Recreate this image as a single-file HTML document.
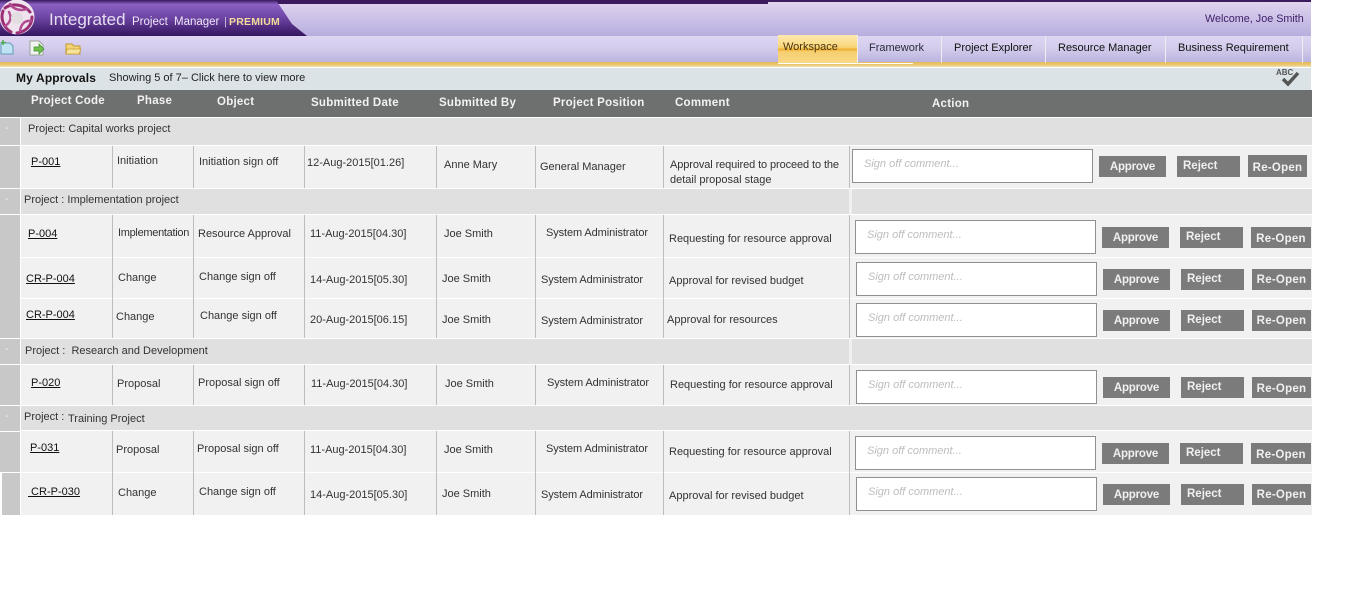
<!DOCTYPE html>
<html><head><meta charset="utf-8"><title>My Approvals</title>
<style>
html,body{margin:0;padding:0;background:#fff}
body{width:1347px;height:616px;overflow:hidden;position:relative;font-family:"Liberation Sans",Arial,sans-serif;font-size:11px;color:#333}
div,span,a{position:absolute;white-space:nowrap}
.t{line-height:14px;height:14px;margin-top:1px}
a.t{color:#111;text-decoration:underline}
.h{font-weight:bold;font-size:11.5px;color:#f2f2f2;line-height:14px;letter-spacing:.25px;margin-top:1px}
.g{background:#e0e0e0;height:26px;left:21px;width:1291px}
.s{background:#c8c8c8;left:0;width:20px}
.r{background:#f2f1f2;left:21px;width:1291px}
.v{background:#bdbdbd;width:1px}
.ta{background:#fff;border:1px solid #8f8f8f;box-sizing:border-box;width:241px;height:34px;font-style:italic;color:#bdbdbd;padding:7px 0 0 11px;line-height:15px}
.b{background:#7b7b7b;color:#f0f0f0;font-weight:bold;font-size:11.5px;height:21px;line-height:21px;text-align:center;box-sizing:border-box;padding-top:1px}
.a{letter-spacing:-.2px}
.o{letter-spacing:.25px}
.j{line-height:19px;text-align:left;text-indent:6px;width:63px}
.m{letter-spacing:-.3px}
.y{letter-spacing:-.1px}
.tab{top:36px;height:27px;line-height:25px;color:#2a2a3a;border-right:1px solid #eee;font-size:11px;box-sizing:border-box}
</style></head><body>

<div style="left:0;top:0;width:1311px;height:36px;background:linear-gradient(#e2d6ef,#cfc3e8 45%,#b8aede)"></div>
<div style="left:0;top:0;width:768px;height:4px;background:#3b1a5e"></div>
<div style="left:768px;top:0;width:543px;height:2px;background:#3b1a5e"></div>
<svg style="position:absolute;left:0;top:0" width="320" height="37"><defs><linearGradient id="p" x1="0" y1="0" x2="0" y2="1"><stop offset="0" stop-color="#3b1a5e"/><stop offset=".12" stop-color="#8a60c2"/><stop offset=".5" stop-color="#6c44a2"/><stop offset="1" stop-color="#35155f"/></linearGradient></defs>
<polygon points="0,0 276,0 292,24 307,36 0,36" fill="url(#p)"/>
<circle cx="17" cy="17" r="17.500" fill="#efe3ee"/>
<g fill="none" stroke-linecap="round">
<path d="M5 8C12 3 24 4 30 12" stroke="#9a2f75" stroke-width="3"/>
<path d="M32 17C32 26 25 32 17 33" stroke="#9a2f75" stroke-width="3"/>
<path d="M11 32C4 28 0 19 3 11" stroke="#9a2f75" stroke-width="3"/>
<path d="M10 4C14 10 21 11 27 9" stroke="#b24c92" stroke-width="2.500"/>
<path d="M31 21C25 20 21 24 20 31" stroke="#b24c92" stroke-width="2.500"/>
<path d="M5 26C10 23 12 18 9 12" stroke="#b24c92" stroke-width="2.500"/>
</g>
<circle cx="17" cy="18" r="6" fill="#e2dde0"/>
</svg>
<span class="t" style="left:49px;top:8px;height:22px;line-height:22px;font-size:17px;color:#e6def0">Integrated</span>
<span class="t" style="left:132px;top:14px;font-size:11.500px;color:#eee6f6">Project</span>
<span class="t" style="left:174px;top:14px;font-size:11.500px;color:#eee6f6">Manager</span>
<span class="t" style="left:224px;top:14px;font-size:11px;color:#cdbfe0">|</span>
<span class="t" style="left:229px;top:14px;font-size:10.500px;font-weight:bold;letter-spacing:.2px;color:#f2dc9a">PREMIUM</span>
<span class="t" style="left:1205px;top:11px;color:#40206a;font-size:10.800px">Welcome, Joe Smith</span>

<div style="left:0;top:36px;width:1311px;height:26px;background:linear-gradient(#ded6f2,#d2cbeb 50%,#bab4df)"></div>
<div style="left:0;top:62px;width:1311px;height:5px;background:linear-gradient(#e3b956,#ecc975 60%,#f1e2b8)"></div>

<svg style="position:absolute;left:0;top:40px" width="90" height="16">
<path d="M1 3H10L13 6V14H1Z" fill="#bfe3f2" stroke="#5f9db8"/><path d="M3 0V5M1 2.500H6" stroke="#46a83e" stroke-width="1.300"/>
<path d="M30 1H39L43 5V15H30Z" fill="#f2f4f2" stroke="#98a098"/><path d="M34 7H39V4L44 9L39 14V11H34Z" fill="#6fbf4a" stroke="#3f8f2f" stroke-width=".7"/>
<path d="M66 4H72L74 6H80V14H66Z" fill="#f3d374" stroke="#c49a32"/><path d="M67 9H81L79 14H66Z" fill="#f8e39a" stroke="#c49a32" stroke-width=".7"/>
</svg>

<div class="tab" style="left:778px;top:35px;width:80px;height:29px;background:linear-gradient(#fde9b0,#f9d67a 42%,#eeae2e 50%,#f6cf70 58%,#f9d98a);padding-left:5px;line-height:25px;color:#4a3410">Workspace</div>
<div class="tab" style="left:858px;width:84px;padding-left:11px">Framework</div>
<div class="tab" style="left:942px;width:104px;padding-left:12px;color:#111">Project Explorer</div>
<div class="tab" style="left:1046px;width:120px;padding-left:12px;color:#111">Resource Manager</div>
<div class="tab" style="left:1166px;width:137px;padding-left:12px;color:#111">Business Requirement</div>
<div style="left:778px;top:63px;width:135px;height:1px;background:#fff"></div>
<div style="left:962px;top:67px;width:200px;height:2px;background:#fff"></div>

<div style="left:0;top:68px;width:1311px;height:22px;background:#dce3e6"></div>
<span class="t" style="left:16px;top:70px;font-weight:bold;font-size:12px;color:#111;letter-spacing:.15px">My Approvals</span>
<span class="t" style="left:109px;top:70px;font-size:11px;color:#222">Showing 5 of 7– Click here to view more</span>
<span class="t" style="left:1276px;top:67px;font-size:8px;font-weight:bold;color:#555;line-height:10px;height:10px">ABC</span>
<svg style="position:absolute;left:1281px;top:71px" width="20" height="16"><path d="M2 8L7 13L17 2" fill="none" stroke="#555" stroke-width="3.500"/></svg>

<div style="left:0;top:90px;width:1312px;height:27px;background:#6e6f6f"></div>
<span class="h" style="left:31px;top:93px">Project Code</span>
<span class="h" style="left:137px;top:93px">Phase</span>
<span class="h" style="left:217px;top:94px">Object</span>
<span class="h" style="left:311px;top:95px">Submitted Date</span>
<span class="h" style="left:439px;top:95px">Submitted By</span>
<span class="h" style="left:553px;top:95px">Project Position</span>
<span class="h" style="left:675px;top:95px">Comment</span>
<span class="h" style="left:932px;top:96px">Action</span>

<!-- left side cells -->
<div class="s" style="top:118px;height:27px"></div>
<div class="s" style="top:146px;height:42px"></div>
<div class="s" style="top:189px;height:25px"></div>
<div class="s" style="top:215px;height:123px"></div>
<div class="s" style="top:339px;height:25px"></div>
<div class="s" style="top:365px;height:40px"></div>
<div class="s" style="top:406px;height:25px"></div>
<div class="s" style="top:432px;height:40px"></div>
<div class="s" style="top:473px;height:42px;left:2px;width:18px"></div>
<span class="t" style="left:5px;top:120px;color:#eee">-</span>
<span class="t" style="left:5px;top:191px;color:#eee">-</span>
<span class="t" style="left:5px;top:341px;color:#eee">-</span>
<span class="t" style="left:5px;top:408px;color:#eee">-</span>

<!-- groups -->
<div class="g" style="top:118px;height:27px"></div>
<div class="g" style="top:189px;height:25px"></div>
<div class="g" style="top:339px;height:25px"></div>
<div class="g" style="top:406px;height:24px"></div>
<div style="left:849px;top:189px;width:3px;height:25px;background:#f2f1f2"></div>
<div style="left:849px;top:339px;width:3px;height:25px;background:#f2f1f2"></div>

<!-- rows -->
<div class="r" style="top:146px;height:42px"></div>
<div class="r" style="top:215px;height:42px"></div>
<div class="r" style="top:258px;height:40px"></div>
<div class="r" style="top:299px;height:39px"></div>
<div class="r" style="top:365px;height:40px"></div>
<div class="r" style="top:431px;height:41px"></div>
<div class="r" style="top:473px;height:42px"></div>

<!-- vertical lines -->
<div class="v" style="left:112px;top:146px;height:42px"></div><div class="v" style="left:193px;top:146px;height:42px"></div><div class="v" style="left:304px;top:146px;height:42px"></div><div class="v" style="left:436px;top:146px;height:42px"></div><div class="v" style="left:535px;top:146px;height:42px"></div><div class="v" style="left:663px;top:146px;height:42px"></div><div class="v" style="left:849px;top:146px;height:42px"></div>
<div class="v" style="left:112px;top:215px;height:123px"></div><div class="v" style="left:193px;top:215px;height:123px"></div><div class="v" style="left:304px;top:215px;height:123px"></div><div class="v" style="left:436px;top:215px;height:123px"></div><div class="v" style="left:535px;top:215px;height:123px"></div><div class="v" style="left:663px;top:215px;height:123px"></div><div class="v" style="left:849px;top:215px;height:123px"></div>
<div class="v" style="left:112px;top:365px;height:40px"></div><div class="v" style="left:193px;top:365px;height:40px"></div><div class="v" style="left:304px;top:365px;height:40px"></div><div class="v" style="left:436px;top:365px;height:40px"></div><div class="v" style="left:535px;top:365px;height:40px"></div><div class="v" style="left:663px;top:365px;height:40px"></div><div class="v" style="left:849px;top:365px;height:40px"></div>
<div class="v" style="left:112px;top:431px;height:84px"></div><div class="v" style="left:193px;top:431px;height:84px"></div><div class="v" style="left:304px;top:431px;height:84px"></div><div class="v" style="left:436px;top:431px;height:84px"></div><div class="v" style="left:535px;top:431px;height:84px"></div><div class="v" style="left:663px;top:431px;height:84px"></div><div class="v" style="left:849px;top:431px;height:84px"></div>

<!-- group labels -->
<span class="t" style="left:28px;top:121px">Project: Capital works project</span>
<span class="t" style="left:24px;top:192px">Project : Implementation project</span>
<span class="t" style="left:25px;top:343px">Project :&nbsp; Research and Development</span>
<span class="t" style="left:24px;top:409px">Project :</span>
<span class="t" style="left:68px;top:411px">Training Project</span>

<!-- row 1 -->
<a class="t" style="left:31px;top:154px">P-001</a>
<span class="t" style="left:117px;top:153px">Initiation</span>
<span class="t" style="left:199px;top:154px">Initiation sign off</span>
<span class="t" style="left:307px;top:155px">12-Aug-2015[01.26]</span>
<span class="t" style="left:444px;top:157px">Anne Mary</span>
<span class="t" style="left:540px;top:159px">General Manager</span>
<span class="t y" style="left:670px;top:157px">Approval required to proceed to the</span>
<span class="t" style="left:670px;top:172px">detail proposal stage</span>
<div class="ta" style="left:852px;top:149px">Sign off comment...</div>
<div class="b a" style="left:1099px;top:156px;width:67px">Approve</div>
<div class="b j" style="left:1177px;top:156px">Reject</div>
<div class="b o" style="left:1248px;top:155px;width:59px;height:22px;line-height:24px">Re-Open</div>

<!-- row 2 -->
<a class="t" style="left:28px;top:226px">P-004</a>
<span class="t m" style="left:118px;top:225px">Implementation</span>
<span class="t" style="left:198px;top:226px">Resource Approval</span>
<span class="t" style="left:310px;top:226px">11-Aug-2015[04.30]</span>
<span class="t" style="left:444px;top:226px">Joe Smith</span>
<span class="t y" style="left:546px;top:225px">System Administrator</span>
<span class="t" style="left:669px;top:231px">Requesting for resource approval</span>
<div class="ta" style="left:855px;top:220px">Sign off comment...</div>
<div class="b a" style="left:1102px;top:227px;width:67px">Approve</div>
<div class="b j" style="left:1180px;top:227px">Reject</div>
<div class="b o" style="left:1251px;top:227px;width:60px;line-height:23px">Re-Open</div>

<!-- row 3 -->
<a class="t" style="left:26px;top:271px">CR-P-004</a>
<span class="t" style="left:118px;top:270px">Change</span>
<span class="t" style="left:199px;top:269px">Change sign off</span>
<span class="t" style="left:310px;top:272px">14-Aug-2015[05.30]</span>
<span class="t" style="left:442px;top:271px">Joe Smith</span>
<span class="t y" style="left:541px;top:272px">System Administrator</span>
<span class="t" style="left:669px;top:273px">Approval for revised budget</span>
<div class="ta" style="left:856px;top:262px">Sign off comment...</div>
<div class="b a" style="left:1103px;top:269px;width:67px">Approve</div>
<div class="b j" style="left:1181px;top:269px">Reject</div>
<div class="b o" style="left:1252px;top:269px;width:59px;line-height:21px">Re-Open</div>

<!-- row 4 -->
<a class="t" style="left:26px;top:307px">CR-P-004</a>
<span class="t" style="left:116px;top:309px">Change</span>
<span class="t" style="left:200px;top:308px">Change sign off</span>
<span class="t" style="left:310px;top:312px">20-Aug-2015[06.15]</span>
<span class="t" style="left:442px;top:312px">Joe Smith</span>
<span class="t y" style="left:541px;top:313px">System Administrator</span>
<span class="t" style="left:667px;top:312px">Approval for resources</span>
<div class="ta" style="left:856px;top:303px">Sign off comment...</div>
<div class="b a" style="left:1103px;top:310px;width:67px">Approve</div>
<div class="b j" style="left:1181px;top:310px">Reject</div>
<div class="b o" style="left:1252px;top:310px;width:59px;line-height:21px">Re-Open</div>

<!-- row 5 -->
<a class="t" style="left:31px;top:375px">P-020</a>
<span class="t" style="left:117px;top:376px">Proposal</span>
<span class="t" style="left:198px;top:375px">Proposal sign off</span>
<span class="t" style="left:311px;top:376px">11-Aug-2015[04.30]</span>
<span class="t" style="left:445px;top:376px">Joe Smith</span>
<span class="t y" style="left:547px;top:375px">System Administrator</span>
<span class="t" style="left:670px;top:377px">Requesting for resource approval</span>
<div class="ta" style="left:856px;top:370px">Sign off comment...</div>
<div class="b a" style="left:1103px;top:377px;width:67px">Approve</div>
<div class="b j" style="left:1181px;top:377px">Reject</div>
<div class="b o" style="left:1252px;top:377px;width:59px;line-height:22px">Re-Open</div>

<!-- row 6 -->
<a class="t" style="left:30px;top:440px">P-031</a>
<span class="t" style="left:116px;top:442px">Proposal</span>
<span class="t" style="left:197px;top:441px">Proposal sign off</span>
<span class="t" style="left:310px;top:442px">11-Aug-2015[04.30]</span>
<span class="t" style="left:444px;top:442px">Joe Smith</span>
<span class="t y" style="left:546px;top:441px">System Administrator</span>
<span class="t" style="left:669px;top:444px">Requesting for resource approval</span>
<div class="ta" style="left:855px;top:436px">Sign off comment...</div>
<div class="b a" style="left:1102px;top:443px;width:67px">Approve</div>
<div class="b j" style="left:1180px;top:443px">Reject</div>
<div class="b o" style="left:1251px;top:443px;width:60px;line-height:22px">Re-Open</div>

<!-- row 7 -->
<a class="t" style="left:28px;top:484px">&nbsp;CR-P-030</a>
<span class="t" style="left:118px;top:485px">Change</span>
<span class="t" style="left:199px;top:484px">Change sign off</span>
<span class="t" style="left:310px;top:487px">14-Aug-2015[05.30]</span>
<span class="t" style="left:442px;top:486px">Joe Smith</span>
<span class="t y" style="left:541px;top:487px">System Administrator</span>
<span class="t" style="left:669px;top:488px">Approval for revised budget</span>
<div class="ta" style="left:856px;top:477px">Sign off comment...</div>
<div class="b a" style="left:1103px;top:484px;width:67px">Approve</div>
<div class="b j" style="left:1181px;top:484px">Reject</div>
<div class="b o" style="left:1252px;top:484px;width:59px;line-height:21px">Re-Open</div>

</body></html>
